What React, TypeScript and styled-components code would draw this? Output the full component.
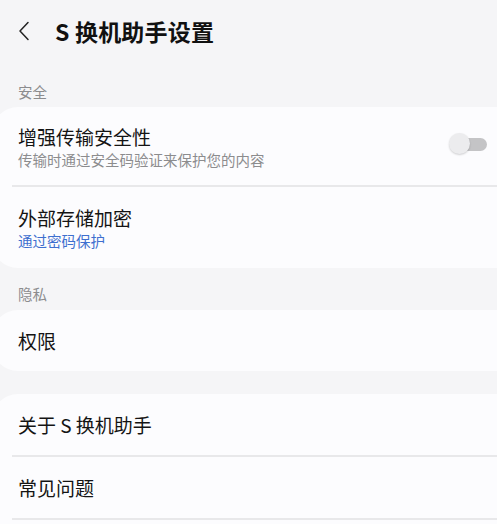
import React from "react";
import styled, { createGlobalStyle } from "styled-components";

const GlobalStyle = createGlobalStyle`
  html, body {
    margin: 0;
    padding: 0;
    background: #f5f5f7;
  }
  body {
    font-family: "Noto Sans CJK SC", "Noto Sans", "Liberation Sans", sans-serif;
    color: #111;
    overflow: hidden;
  }
`;

const Page = styled.div`
  width: 497px;
  height: 524px;
  overflow: hidden;
`;

const Header = styled.header`
  height: 62px;
  display: flex;
  align-items: center;
  padding-left: 17px;
  gap: 24px;
`;

const BackButton = styled.span`
  width: 14px;
  height: 22px;
  display: flex;
  align-items: center;
  justify-content: center;
`;

const Title = styled.h1`
  margin: 0;
  font-size: 23px;
  font-weight: 700;
  letter-spacing: 0.2px;
  color: #111;
`;

const SectionLabel = styled.div<{ $top: number; $height: number }>`
  box-sizing: border-box;
  padding: ${(p) => p.$top}px 18px 0;
  height: ${(p) => p.$height}px;
  font-size: 14.5px;
  line-height: 20px;
  color: #8c8c8e;
`;

const Card = styled.section<{ $gapTop?: number }>`
  margin: ${(p) => p.$gapTop ?? 0}px -24px 0 -8px;
  background: #fcfcfe;
  border-radius: 26px;
  display: flex;
  flex-direction: column;
`;

const Row = styled.div<{ $height: number; $divider?: boolean }>`
  height: ${(p) => p.$height}px;
  flex-shrink: 0;
  box-sizing: border-box;
  padding-right: 34px;
  display: flex;
  align-items: center;
  justify-content: space-between;
  border-bottom: ${(p) => (p.$divider ? "2px solid #e8e8ea" : "none")};
  margin-left: ${(p) => (p.$divider ? 20 : 0)}px;
  padding-left: ${(p) => (p.$divider ? 6 : 26)}px;
`;

const TextBlock = styled.div`
  display: flex;
  flex-direction: column;
`;

const RowTitle = styled.div`
  font-size: 19px;
  line-height: 25px;
  color: #141414;
`;

const RowSub = styled.div<{ $accent?: boolean }>`
  font-size: 14.5px;
  line-height: 19px;
  margin-top: 1px;
  color: ${(p) => (p.$accent ? "#3e6fcf" : "#8c8c8e")};
`;

const Toggle = styled.div`
  position: relative;
  width: 38px;
  height: 22px;
  margin-top: -4px;
`;

const Track = styled.div`
  position: absolute;
  left: 13px;
  top: 5px;
  width: 25px;
  height: 13px;
  border-radius: 7px;
  background: #c4c4c6;
`;

const Knob = styled.div`
  position: absolute;
  left: 0;
  top: 0;
  width: 21px;
  height: 21px;
  border-radius: 50%;
  background: #ececee;
  box-shadow: 0 1px 2px rgba(0, 0, 0, 0.18);
`;

const ChevronLeft = () => (
  <svg width="12" height="20" viewBox="0 0 12 20" fill="none">
    <path d="M10 1.5 L2 10 L10 18.5" stroke="#222" strokeWidth="1.5" strokeLinecap="round" strokeLinejoin="round" />
  </svg>
);

const App: React.FC = () => (
  <Page>
    <GlobalStyle />
    <Header>
      <BackButton>
        <ChevronLeft />
      </BackButton>
      <Title>S 换机助手设置</Title>
    </Header>

    <SectionLabel $top={20} $height={45}>安全</SectionLabel>
    <Card>
      <Row $height={80} $divider>
        <TextBlock>
          <RowTitle>增强传输安全性</RowTitle>
          <RowSub>传输时通过安全码验证来保护您的内容</RowSub>
        </TextBlock>
        <Toggle>
          <Track />
          <Knob />
        </Toggle>
      </Row>
      <Row $height={81}>
        <TextBlock>
          <RowTitle>外部存储加密</RowTitle>
          <RowSub $accent>通过密码保护</RowSub>
        </TextBlock>
      </Row>
    </Card>

    <SectionLabel $top={16} $height={42}>隐私</SectionLabel>
    <Card>
      <Row $height={61}>
        <RowTitle>权限</RowTitle>
      </Row>
    </Card>

    <Card $gapTop={23}>
      <Row $height={63} $divider>
        <RowTitle>关于 S 换机助手</RowTitle>
      </Row>
      <Row $height={63} $divider>
        <RowTitle>常见问题</RowTitle>
      </Row>
      <Row $height={60} />
    </Card>
  </Page>
);

export default App;
